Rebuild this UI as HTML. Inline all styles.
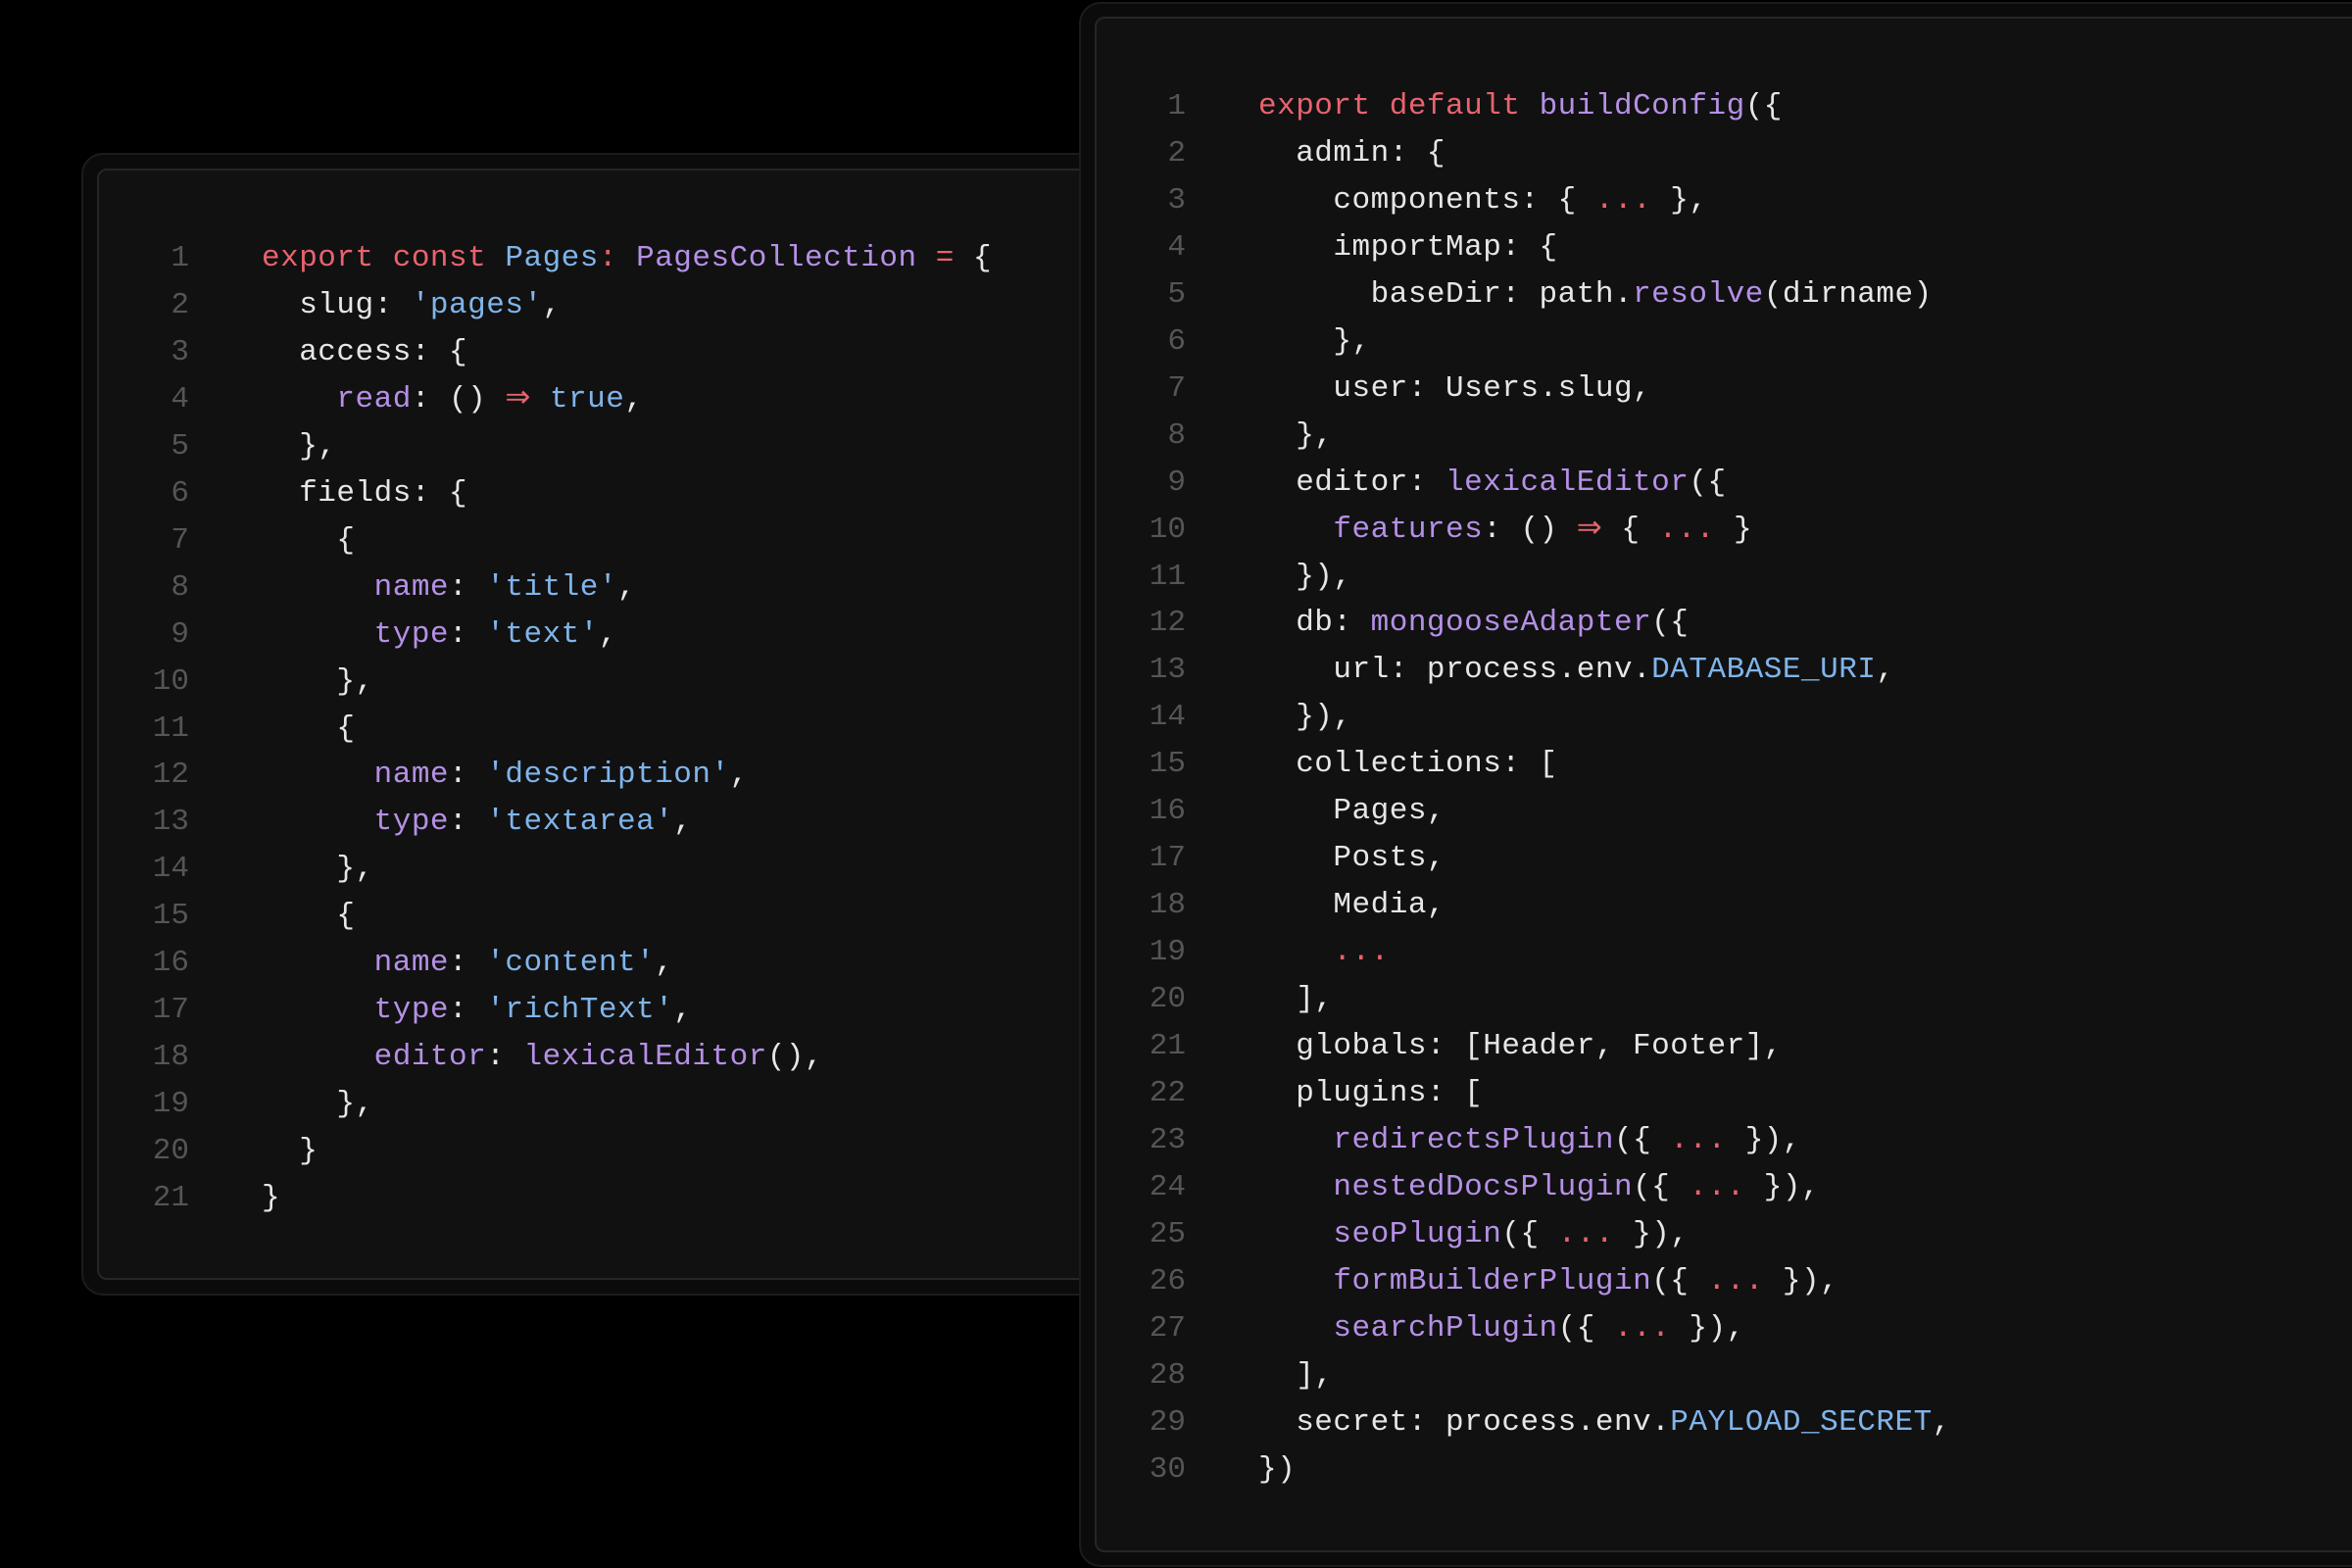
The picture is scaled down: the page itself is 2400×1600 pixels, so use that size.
<!DOCTYPE html>
<html><head><meta charset="utf-8"><style>
html,body{margin:0;padding:0;background:#000;width:2400px;height:1600px;overflow:hidden;position:relative}
.o{position:absolute;background:#0b0b0b;border:2px solid #1c1c1c;border-radius:22px;box-sizing:border-box}
.i{position:absolute;background:#111;border:2px solid #262626;border-radius:10px;box-sizing:border-box}
.code{position:absolute;font-family:"Liberation Mono",monospace;font-size:31px;letter-spacing:0.5px;line-height:47.95px;color:#e6e6e6;white-space:pre;margin:0}
.n{position:absolute;font-family:"Liberation Mono",monospace;font-size:31px;line-height:47.95px;color:#555;white-space:pre;text-align:right;margin:0}
.r{color:#e8636f}.b{color:#80b4ea}.p{color:#b590e6}
</style></head><body>
<div class="o" style="left:83px;top:156px;width:1100px;height:1166px"></div>
<div class="i" style="left:99px;top:172px;width:1100px;height:1134px"></div>
<pre class="n" style="left:100px;top:240px;width:93px">1
2
3
4
5
6
7
8
9
10
11
12
13
14
15
16
17
18
19
20
21</pre>
<pre class="code" style="left:267px;top:240px"><span class="r">export const</span> <span class="b">Pages</span><span class="r">:</span> <span class="p">PagesCollection</span> <span class="r">=</span> {
  slug: <span class="b">'pages'</span>,
  access: {
    <span class="p">read</span>: () <span class="r">⇒</span> <span class="b">true</span>,
  },
  fields: {
    {
      <span class="p">name</span>: <span class="b">'title'</span>,
      <span class="p">type</span>: <span class="b">'text'</span>,
    },
    {
      <span class="p">name</span>: <span class="b">'description'</span>,
      <span class="p">type</span>: <span class="b">'textarea'</span>,
    },
    {
      <span class="p">name</span>: <span class="b">'content'</span>,
      <span class="p">type</span>: <span class="b">'richText'</span>,
      <span class="p">editor</span>: <span class="p">lexicalEditor</span>(),
    },
  }
}</pre>
<div class="o" style="left:1101px;top:2px;width:1400px;height:1597px"></div>
<div class="i" style="left:1117px;top:17px;width:1400px;height:1567px"></div>
<pre class="n" style="left:1120px;top:85px;width:90px">1
2
3
4
5
6
7
8
9
10
11
12
13
14
15
16
17
18
19
20
21
22
23
24
25
26
27
28
29
30</pre>
<pre class="code" style="left:1284px;top:85px"><span class="r">export default</span> <span class="p">buildConfig</span>({
  admin: {
    components: { <span class="r">...</span> },
    importMap: {
      baseDir: path.<span class="p">resolve</span>(dirname)
    },
    user: Users.slug,
  },
  editor: <span class="p">lexicalEditor</span>({
    <span class="p">features</span>: () <span class="r">⇒</span> { <span class="r">...</span> }
  }),
  db: <span class="p">mongooseAdapter</span>({
    url: process.env.<span class="b">DATABASE_URI</span>,
  }),
  collections: [
    Pages,
    Posts,
    Media,
    <span class="r">...</span>
  ],
  globals: [Header, Footer],
  plugins: [
    <span class="p">redirectsPlugin</span>({ <span class="r">...</span> }),
    <span class="p">nestedDocsPlugin</span>({ <span class="r">...</span> }),
    <span class="p">seoPlugin</span>({ <span class="r">...</span> }),
    <span class="p">formBuilderPlugin</span>({ <span class="r">...</span> }),
    <span class="p">searchPlugin</span>({ <span class="r">...</span> }),
  ],
  secret: process.env.<span class="b">PAYLOAD_SECRET</span>,
})</pre>
</body></html>
